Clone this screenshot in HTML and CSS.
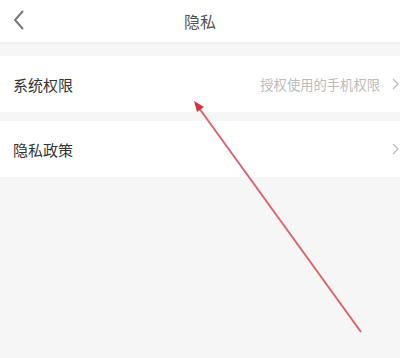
FILE: index.html
```html
<!DOCTYPE html>
<html lang="zh">
<head>
<meta charset="utf-8">
<link rel="stylesheet" href="styles.css">
</head>
<body>
<div class="page">
  <header class="topbar">
    <svg class="back" width="14" height="22" viewBox="0 0 14 22"><path d="M11 2 L3 11 L11 20" fill="none" stroke="#777" stroke-width="2"/></svg>
    <div class="title">隐私</div>
  </header>
  <div class="row first">
    <span class="label">系统权限</span>
    <span class="hint">授权使用的手机权限</span>
    <svg class="chev" width="7" height="12" viewBox="0 0 7 12"><path d="M1 1 L6 6 L1 11" fill="none" stroke="#bbb" stroke-width="1.3"/></svg>
  </div>
  <div class="row">
    <span class="label">隐私政策</span>
    <svg class="chev" width="7" height="12" viewBox="0 0 7 12"><path d="M1 1 L6 6 L1 11" fill="none" stroke="#bbb" stroke-width="1.3"/></svg>
  </div>
  <svg class="arrow" width="400" height="358" viewBox="0 0 400 358">
    <line x1="361" y1="332" x2="199" y2="108" stroke="#d9646e" stroke-width="2"/>
    <polygon points="194,101 204,107 197,112" fill="#d4343f"/>
  </svg>
</div>
</body>
</html>
```
FILE: styles.css
```css
html, body { margin: 0; padding: 0; }
body {
  width: 400px; height: 358px; overflow: hidden;
  background: #f6f6f6;
  font-family: "Noto Sans CJK SC", "Noto Sans", sans-serif;
}
.page { position: relative; width: 400px; height: 358px; }
.topbar {
  height: 42px; background: #fff;
  border-bottom: 2px solid #efefef;
  display: flex; align-items: center; justify-content: center;
  position: relative;
}
.back { position: absolute; left: 12px; top: 9px; }
.title { font-size: 16px; color: #555; }
.row {
  background: #fff; height: 56px; margin-top: 9px;
  display: flex; align-items: center; padding-left: 13px;
}
.row.first { margin-top: 12px; }
.label { font-size: 15px; color: #333; flex: 1; }
.hint { font-size: 13.3px; color: #bbb; margin-right: 12px; }
.chev { margin-right: 1px; }
.arrow { position: absolute; left: 0; top: 0; pointer-events: none; }
```
